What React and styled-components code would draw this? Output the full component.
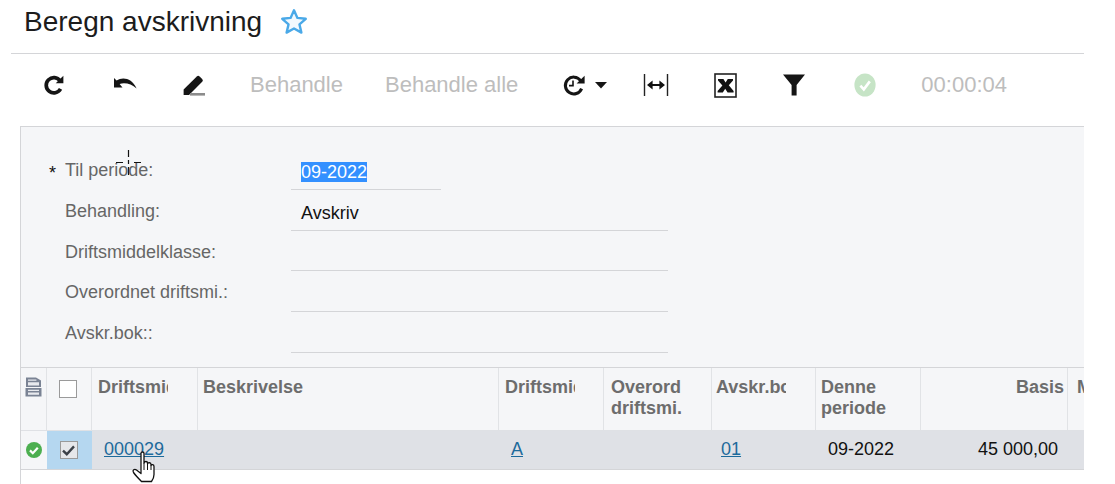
import React from "react";
import styled, { createGlobalStyle } from "styled-components";

const GlobalStyle = createGlobalStyle`
  html, body { margin: 0; padding: 0; background: #fff; }
  body { font-family: "Liberation Sans", Arial, sans-serif; overflow: hidden; }
`;

// ---------- LAYOUT ----------
const Page = styled.div`
  width: 1084px;
  height: 484px;
  overflow: hidden;
  padding-left: 11px;
  box-sizing: border-box;
`;
const TitleBar = styled.div`
  height: 54px;
  box-sizing: border-box;
  border-bottom: 1px solid #d4d5d8;
  padding: 4px 0 0 13px;
  display: flex;
  align-items: flex-start;
  gap: 17px;
`;
const Title = styled.h1`
  margin: 0;
  font-size: 28px;
  line-height: 36px;
  font-weight: 400;
  color: #1c1c1c;
`;
const Toolbar = styled.div`
  height: 72px;
  box-sizing: border-box;
  padding-bottom: 10px;
  display: flex;
  align-items: center;
`;
const ToolSlot = styled.div`
  width: ${(p) => p.$w}px;
  margin-left: ${(p) => p.$ml || 0}px;
  display: flex;
  justify-content: center;
  align-items: center;
  flex: none;
`;
const ToolText = styled.span`
  font-size: 22px;
  color: #bdbdbd;
  white-space: nowrap;
  margin-left: ${(p) => p.$ml}px;
`;
const Panel = styled.div`
  margin-left: 9px;
  border-top: 1px solid #d4d5d8;
  border-left: 1px solid #d4d5d8;
  height: 357px;
  position: relative;
`;

// ---------- FORM ----------
const Form = styled.div`
  height: 240px;
  box-sizing: border-box;
  padding-top: 22px;
  background: #f5f6f8;
  display: flex;
  flex-direction: column;
`;
const FormRow = styled.div`
  height: 40.8px;
  display: grid;
  grid-template-columns: 270px ${(p) => (p.$short ? "150px" : "377px")};
`;
const Label = styled.label`
  padding: 11px 0 0 44px;
  font-size: 18px;
  line-height: 20px;
  color: #666;
  position: relative;
  white-space: nowrap;
`;
const Required = styled.span`
  position: absolute;
  left: 28px;
  top: 14px;
  font-size: 18px;
  color: #111;
`;
const Value = styled.div`
  border-bottom: 1px solid #d4d5d8;
  padding: 13px 0 0 10px;
  font-size: 18px;
  line-height: 20px;
  color: #111;
`;
const Selected = styled.span`
  background: #3390ff;
  color: #fff;
  display: inline-block;
`;
const IBeam = styled.svg`
  position: absolute;
  left: 95px;
  top: 23px;
`;

// ---------- GRID ----------
const Table = styled.div`
  border-top: 1px solid #d4d5d8;
`;
const columns = "26px 45px 106px 301px 105px 108px 104px 105px 147px 60px";
const HeaderRow = styled.div`
  display: grid;
  grid-template-columns: ${columns};
  height: 62px;
  background: #f5f6f8;
`;
const HeadCell = styled.div`
  border-right: 1px solid #e1e3e6;
  box-sizing: border-box;
  padding: ${(p) => p.$pt ?? 9}px ${(p) => p.$pr ?? 0}px 0 ${(p) => p.$pl ?? 6}px;
  font-size: 18px;
  line-height: 21px;
  font-weight: 700;
  color: #6d6d6d;
  overflow: hidden;
  text-align: ${(p) => (p.$right ? "right" : "left")};
  display: ${(p) => (p.$center ? "flex" : "block")};
  justify-content: center;
`;
const Clip = styled.span`
  display: block;
  width: ${(p) => p.$w}px;
  overflow: hidden;
  white-space: nowrap;
`;
const BodyRow = styled.div`
  display: grid;
  grid-template-columns: ${columns};
  height: 40px;
  box-sizing: border-box;
  border-top: 1px solid #dfe1e5;
  border-bottom: 1px solid #d4d5d8;
  background: #dfe1e6;
`;
const StatusCell = styled.div`
  background: #f5f6f8;
  display: flex;
  align-items: center;
  justify-content: center;
`;
const SelectCell = styled.div`
  background: #b5d7f0;
  display: flex;
  align-items: center;
  justify-content: center;
`;
const Cell = styled.div`
  position: relative;
  font-size: 18px;
  line-height: 37px;
  color: #111;
  padding-left: ${(p) => p.$pl ?? 0}px;
  padding-right: ${(p) => p.$pr ?? 0}px;
  text-align: ${(p) => (p.$right ? "right" : "left")};
  white-space: nowrap;
`;
const CellLink = styled.a`
  color: #1d6a9b;
  text-decoration: underline;
`;
const Check = styled.div`
  width: 18px;
  height: 18px;
  margin-right: 2px;
  box-sizing: border-box;
  border: 1.5px solid #9a9a9a;
  background: ${(p) => (p.$on ? "#e6e7ea" : "#fff")};
  display: flex;
  align-items: center;
  justify-content: center;
`;
const HandCursor = styled.svg`
  position: absolute;
  left: 39px;
  top: 20px;
`;

// ---------- ICONS ----------
const Star = () => (
  <svg width="30" height="30" viewBox="0 0 28 28" style={{ marginTop: 3 }}>
    <path d="M14 3l3.200 7.200 7.800.8-5.900 5.200 1.800 7.700L14 20l-6.900 3.900 1.800-7.700L3 11l7.800-.8z" fill="#f2f9fe" stroke="#4aa9e8" strokeWidth="2.200" strokeLinejoin="round" />
  </svg>
);
const Refresh = () => (
  <svg width="24" height="24" viewBox="0 0 22 22">
    <path d="M16.600 7.200A7 7 0 1 0 17 14.600" fill="none" stroke="#151515" strokeWidth="3.400" />
    <path d="M12.600 9.400h7V2.600z" fill="#151515" />
  </svg>
);
const Undo = () => (
  <svg width="26" height="20" viewBox="0 0 26 20">
    <path d="M1 9.600V3l2.600 2.600C9.500 1.600 19 3 23.600 13.600 18.600 9 12 7.200 6.600 9l2.900 3.400H1z" fill="#151515" />
  </svg>
);
const Pencil = () => (
  <svg width="24" height="24" viewBox="0 0 24 24">
    <path d="M1.600 22v-5.400L14.800 3.400a2 2 0 0 1 2.800 0l2.600 2.600a2 2 0 0 1 0 2.800L7 22z" fill="#151515" />
    <rect x="8" y="20" width="15" height="2.600" fill="#8c8c8c" />
  </svg>
);
const Schedule = () => (
  <svg width="24" height="24" viewBox="0 0 24 24">
    <path d="M18.600 7.600A8.400 8.400 0 1 0 19.600 15.600" fill="none" stroke="#151515" strokeWidth="3" />
    <path d="M14.600 10.400h8V2.800z" fill="#151515" />
    <path d="M11 7.400v5.200H7" fill="none" stroke="#151515" strokeWidth="1.600" />
  </svg>
);
const Caret = () => (
  <svg width="12" height="7" viewBox="0 0 12 7" style={{ marginLeft: 9, marginTop: 1 }}>
    <path d="M0 0h12L6 6.500z" fill="#151515" />
  </svg>
);
const FitColumns = () => (
  <svg width="26" height="24" viewBox="0 0 26 24">
    <path d="M1.500 1v22M24.500 1v22" stroke="#222" strokeWidth="1.400" />
    <path d="M7 12h12" stroke="#111" strokeWidth="2" />
    <path d="M9.600 7.600V16.400L4 12zM16.400 7.600V16.400L22 12z" fill="#111" />
  </svg>
);
const ExcelBox = () => (
  <svg width="23" height="25" viewBox="0 0 23 25">
    <rect x="1" y="1" width="21" height="23" fill="#fff" stroke="#222" strokeWidth="1.600" />
    <path d="M4 6h5.400l2.200 3.400L13.800 6H19v1.400l-4.200 4.800L19.600 18v1.400h-6l-2.400-3.600-2.400 3.600H3.600V18l4.800-5.600L4 7.400z" fill="#111" />
  </svg>
);
const Funnel = () => (
  <svg width="24" height="24" viewBox="0 0 24 24">
    <path d="M1 1.600h22L14.600 12v10.400H9.600V12z" fill="#151515" />
  </svg>
);
const OkFaded = () => (
  <svg width="22" height="24" viewBox="0 0 22 24">
    <ellipse cx="11" cy="12" rx="10.600" ry="11.600" fill="#c6e4c6" />
    <path d="M6.400 12.600l3.400 3.800 6-8" fill="none" stroke="#fff" strokeWidth="2.600" />
  </svg>
);
const GroupIcon = () => (
  <svg width="17" height="20" viewBox="0 0 17 20">
    <path d="M1 0.500h10l5 3v6.500H1z" fill="#7a8394" />
    <rect x="0.500" y="11" width="16" height="8.500" fill="#7a8394" />
    <path d="M3 2.400h8.400v1.400H3zM3 5.200h11v3.200H3zM3 12.800h11v1.300H3zM3 15.600h11v2.200H3z" fill="#e8eaee" />
  </svg>
);
const OkSmall = () => (
  <svg width="16" height="16" viewBox="0 0 16 16">
    <circle cx="8" cy="8" r="8" fill="#4caf50" />
    <path d="M4 8.400l2.800 2.800 5-5.400" fill="none" stroke="#fff" strokeWidth="2.200" />
  </svg>
);
const Tick = () => (
  <svg width="13" height="11" viewBox="0 0 13 11">
    <path d="M1 5.600l3.800 3.600L12 1.400" fill="none" stroke="#3c4148" strokeWidth="2.400" />
  </svg>
);

// ---------- MAIN COMPONENT ----------
const formRows = [
  { label: "Til periode:", required: true, short: true },
  { label: "Behandling:", value: "Avskriv" },
  { label: "Driftsmiddelklasse:" },
  { label: "Overordnet driftsmi.:" },
  { label: "Avskr.bok::" },
];

const App = () => (
  <Page>
    <GlobalStyle />
    <TitleBar>
      <Title>Beregn avskrivning</Title>
      <Star />
    </TitleBar>
    <Toolbar>
      <ToolSlot $w={24} $ml={31}><Refresh /></ToolSlot>
      <ToolSlot $w={26} $ml={47}><Undo /></ToolSlot>
      <ToolSlot $w={24} $ml={43}><Pencil /></ToolSlot>
      <ToolText $ml={44}>Behandle</ToolText>
      <ToolText $ml={42}>Behandle alle</ToolText>
      <ToolSlot $w={48} $ml={42}><Schedule /><Caret /></ToolSlot>
      <ToolSlot $w={26} $ml={35}><FitColumns /></ToolSlot>
      <ToolSlot $w={23} $ml={45}><ExcelBox /></ToolSlot>
      <ToolSlot $w={24} $ml={45}><Funnel /></ToolSlot>
      <ToolSlot $w={22} $ml={48}><OkFaded /></ToolSlot>
      <ToolText $ml={45}>00:00:04</ToolText>
    </Toolbar>
    <Panel>
      <IBeam width="28" height="26" viewBox="0 0 28 26">
        <path d="M12.500 0v7M12.500 10v4M12.500 17v8M0 12.500h7M18 12.500h7" stroke="#111" strokeWidth="1.200" />
      </IBeam>
      <Form>
        {formRows.map((row) => (
          <FormRow key={row.label} $short={row.short}>
            <Label>
              {row.required && <Required>*</Required>}
              {row.label}
            </Label>
            <Value>
              {row.required ? <Selected>09-2022</Selected> : row.value}
            </Value>
          </FormRow>
        ))}
      </Form>
      <Table>
        <HeaderRow>
          <HeadCell $center $pl={0}><GroupIcon /></HeadCell>
          <HeadCell $center $pl={0} $pt={12}><Check /></HeadCell>
          <HeadCell><Clip $w={70}>Driftsmiddel</Clip></HeadCell>
          <HeadCell $pl={5}>Beskrivelse</HeadCell>
          <HeadCell><Clip $w={70}>Driftsmiddel</Clip></HeadCell>
          <HeadCell $pl={7}>Overord<br />driftsmi.</HeadCell>
          <HeadCell $pl={4}><Clip $w={70}>Avskr.bok</Clip></HeadCell>
          <HeadCell $pl={5}>Denne<br />periode</HeadCell>
          <HeadCell $right $pr={3}>Basis</HeadCell>
          <HeadCell $pl={9}><Clip $w={7}>Metode</Clip></HeadCell>
        </HeaderRow>
        <BodyRow>
          <StatusCell><OkSmall /></StatusCell>
          <SelectCell><Check $on><Tick /></Check></SelectCell>
          <Cell $pl={12}>
            <CellLink href="#">000029</CellLink>
            <HandCursor width="28" height="34" viewBox="0 0 28 34">
              <path d="M10 2.500c0-2 3-2 3 0v9.500c.5-2 3.500-2 3.500 0v1c.5-2 3.500-1.500 3.500.5v1c.5-1.500 3-1 3 1v8c0 3-1 5-2.500 7H10.500C8.500 28.500 5 25 2.500 21.500c-1.500-2.500 1-4 3-2.500l4.500 3.500z" fill="#fff" stroke="#111" strokeWidth="1.300" strokeLinejoin="round" />
              <path d="M13 12v7M16.500 13v6M20 14.500V19" stroke="#111" strokeWidth="1" />
            </HandCursor>
          </Cell>
          <Cell />
          <Cell $pl={12}><CellLink href="#">A</CellLink></Cell>
          <Cell />
          <Cell $pl={9}><CellLink href="#">01</CellLink></Cell>
          <Cell $pl={12}>09-2022</Cell>
          <Cell $right $pr={10}>45 000,00</Cell>
          <Cell />
        </BodyRow>
      </Table>
    </Panel>
  </Page>
);

export default App;
